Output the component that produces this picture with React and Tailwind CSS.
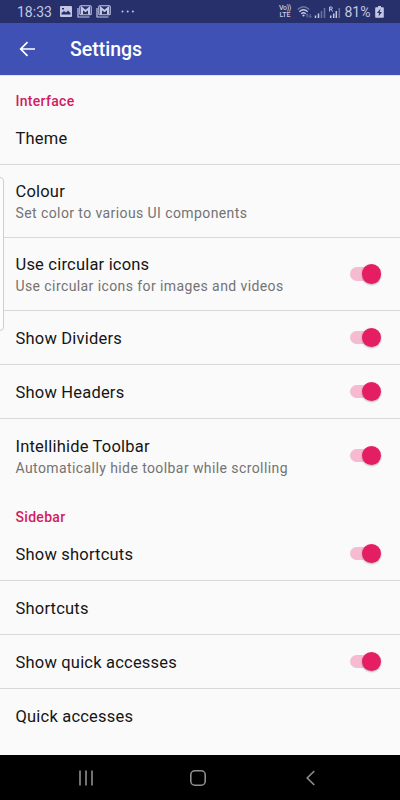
const sections = [
  {
    title: "Interface",
    items: [
      { title: "Theme" },
      { title: "Colour", summary: "Set color to various UI components" },
      { title: "Use circular icons", summary: "Use circular icons for images and videos", toggle: true },
      { title: "Show Dividers", toggle: true },
      { title: "Show Headers", toggle: true },
      { title: "Intellihide Toolbar", summary: "Automatically hide toolbar while scrolling", toggle: true },
    ],
  },
  {
    title: "Sidebar",
    items: [
      { title: "Show shortcuts", toggle: true },
      { title: "Shortcuts" },
      { title: "Show quick accesses", toggle: true },
      { title: "Quick accesses" },
    ],
  },
];

function MailIcon() {
  return (
    <svg width="15" height="13" viewBox="0 0 15 13" fill="none" aria-hidden="true">
      <path d="M1 3v9h11.5" stroke="#c3c7e4" strokeWidth="1.2" />
      <rect x="2.8" y="0.8" width="11.4" height="9" rx="1" stroke="#c3c7e4" strokeWidth="1.1" />
      <path d="M5 9.500V3.200l3.500 2.800L12 3.200v6.300" stroke="#c3c7e4" strokeWidth="2" />
    </svg>
  );
}

function StatusBar() {
  return (
    <div className="flex h-[23px] items-center bg-[#27306b] text-[#c3c7e4]">
      <span className="ml-[17px] w-[36px] pt-px text-[14px] leading-[23px] whitespace-nowrap">18:33</span>
      <svg className="ml-[7px]" width="12" height="11" viewBox="0 0 12 11" aria-hidden="true">
        <rect width="12" height="11" rx="1" fill="#c3c7e4" />
        <path d="M1.5 8.5V7L4 5l2 1.5L8 4.5l2.5 2.5v1.5z" fill="#27306b" />
        <rect x="2" y="2" width="2" height="1.5" fill="#27306b" />
      </svg>
      <div className="ml-[5px] flex gap-[3.5px]">
        <MailIcon />
        <MailIcon />
      </div>
      <svg className="ml-[10px]" width="14" height="3" viewBox="0 0 14 3" fill="#c3c7e4" aria-hidden="true">
        <circle cx="1.5" cy="1.5" r="1" />
        <circle cx="6.700" cy="1.5" r="1" />
        <circle cx="11.900" cy="1.5" r="1" />
      </svg>
      <div className="ml-auto flex items-center">
        <div className="w-[13px] text-center text-[7px] leading-[6.5px] font-medium">
          <div className="-mx-1 tracking-[-0.3px]">Vo))</div>
          <div className="-mx-1">LTE</div>
        </div>
        <svg className="ml-[5px]" width="45" height="14" viewBox="0 0 45 14" fill="none" aria-hidden="true">
          <path d="M0.700 4.500Q6.500-1 12.300 4.500" stroke="#6d74a5" strokeWidth="1.3" />
          <path d="M2.300 6.700q4.200-3.800 8.400 0M4.200 8.800q2.300-2 4.600 0" stroke="#c3c7e4" strokeWidth="1.3" />
          <circle cx="6.500" cy="10.500" r="1.1" fill="#c3c7e4" />
          <path d="M10.200 12.500V9M9 10.200 10.200 9l1.200 1.200M13.200 9v3.500M12 11.300l1.200 1.200 1.200-1.200" stroke="#6d74a5" />
          <path d="M18.500 13V10.500M21.500 13V8.500" stroke="#c3c7e4" strokeWidth="1.5" />
          <path d="M24.500 13V6M27.500 13V3" stroke="#6d74a5" strokeWidth="1.5" />
          <path d="M33.700 13V10.500M36.700 13V8.500M39.300 13V6" stroke="#c3c7e4" strokeWidth="1.5" />
          <path d="M42.300 13V3" stroke="#6d74a5" strokeWidth="1.5" />
          <path d="M32.600 6.500V2h1.700q1 0 1 1.100t-1 1.100h-1.500M34.300 4.200 35.500 6.500" stroke="#c3c7e4" />
        </svg>
        <span className="ml-[3px] w-[30px] pt-px text-[14px] leading-[23px] whitespace-nowrap">81%</span>
        <svg className="mr-[16.500px]" width="9" height="12" viewBox="0 0 9 12" aria-hidden="true">
          <path d="M3 0h3v1.300h2q.8 0 .8.8V11q0 .8-.8.8H1Q.2 11.800.2 11V2.100q0-.8.8-.8h2z" fill="#c3c7e4" />
          <path d="M5.500 2.500 2 7h2.200L3.500 10.500 7 6H4.800z" fill="#27306b" />
        </svg>
      </div>
    </div>
  );
}

function Toolbar() {
  return (
    <header className="flex h-[52px] items-center bg-[#3f51b5] text-white">
      <svg className="ml-[19px]" width="17" height="16" viewBox="0 0 17 16" fill="none" stroke="currentColor" strokeWidth="1.7" aria-hidden="true">
        <path d="M16 8H2M8.500 1.200 1.700 8l6.800 6.800" />
      </svg>
      <h1 className="ml-[34px] pt-[2px] text-[19.500px] leading-6 font-medium">Settings</h1>
    </header>
  );
}

function Toggle() {
  return (
    <span role="switch" aria-checked="true" className="flex h-[13.500px] w-[31px] items-center justify-end rounded-full bg-[linear-gradient(90deg,#f6bbd0_26px,transparent_26px)]">
      <span className="size-[19.500px] shrink-0 rounded-full bg-[#e51e63] shadow-[0_1px_2px_rgba(0,0,0,0.3)]" />
    </span>
  );
}

function Preference({ title, summary, toggle, divider }) {
  return (
    <div className={`flex items-center justify-between pr-[19px] pl-[15.500px] ${summary ? "h-[73px]" : "h-[54px]"} ${divider ? "border-b border-[#d8d8d8]" : ""}`}>
      <div className="pt-[2px]">
        <div className="text-[16.500px] leading-[22px] tracking-[0.2px] text-[#151515]">{title}</div>
        {summary && <div className="text-[14px] leading-5 tracking-[0.410px] text-[#737373]">{summary}</div>}
      </div>
      {toggle && <Toggle />}
    </div>
  );
}

function NavigationBar() {
  return (
    <nav className="flex h-[45px] items-center bg-black text-[#8f8f8f]">
      <svg className="ml-[78px]" width="16" height="16" viewBox="0 0 16 16" fill="none" stroke="currentColor" strokeWidth="1.6" aria-hidden="true">
        <path d="M2 .5v15M8 .5v15M14 .5v15" />
      </svg>
      <svg className="ml-[96px]" width="16" height="16" viewBox="0 0 16 16" fill="none" stroke="currentColor" strokeWidth="1.6" aria-hidden="true">
        <rect x=".8" y=".8" width="14.400" height="14.400" rx="4" />
      </svg>
      <svg className="ml-[100px]" width="9" height="16" viewBox="0 0 9 16" fill="none" stroke="currentColor" strokeWidth="1.6" aria-hidden="true">
        <path d="M8.300 1 1.200 8l7.100 7" />
      </svg>
    </nav>
  );
}

export default function App() {
  return (
    <div className="relative flex h-[800px] w-[400px] flex-col overflow-hidden bg-[#fafafa] font-['Roboto',sans-serif]">
      <StatusBar />
      <Toolbar />
      <main className="flex-1 border-t border-[#e4e4e8]">
        {sections.map((section) => (
          <section key={section.title}>
            <h2 className="h-[35px] pt-[16px] pl-[15.500px] text-[14px] leading-[18px] font-medium tracking-[0.3px] text-[#d21b60]">{section.title}</h2>
            {section.items.map((item, i) => (
              <Preference key={item.title} {...item} divider={i < section.items.length - 1} />
            ))}
          </section>
        ))}
      </main>
      <NavigationBar />
      {/* edge panel handle, sits over the list */}
      <div className="absolute top-[177px] left-[-4px] h-[154px] w-[8px] rounded-r-[4px] border border-[#cfcfcf] bg-[#fcfcfc]" />
    </div>
  );
}
